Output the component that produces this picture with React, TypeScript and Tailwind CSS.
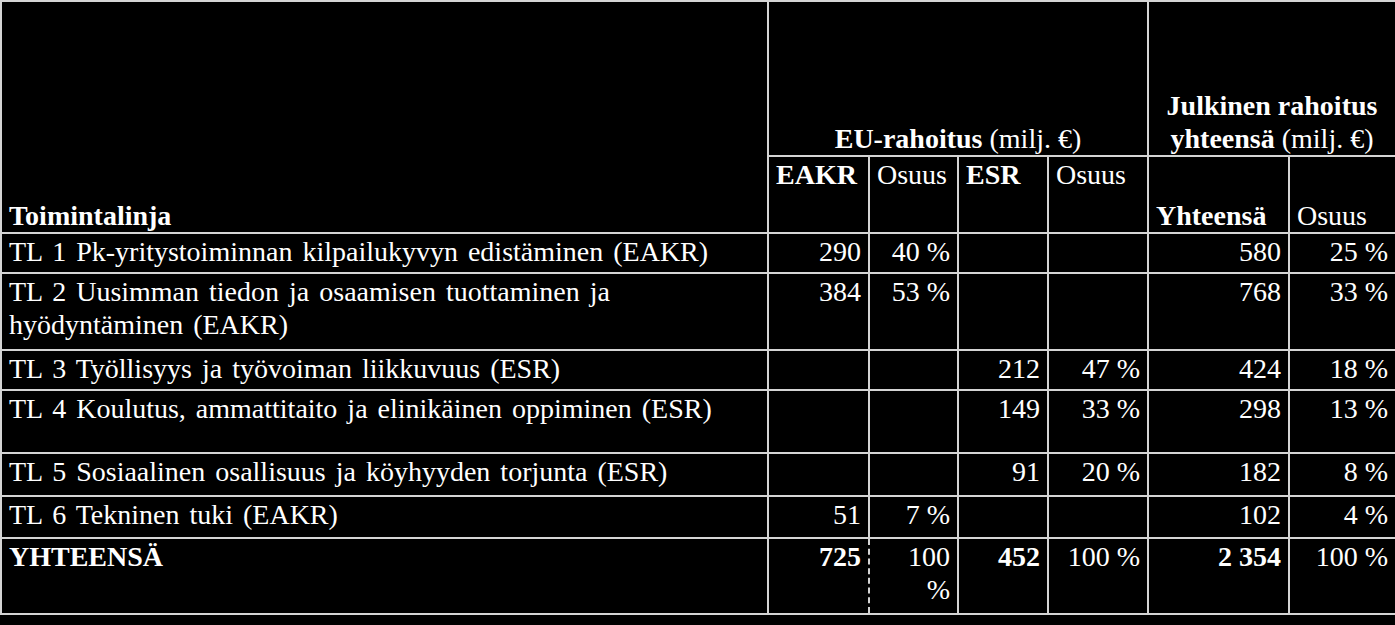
const rows = [
  { name: "TL 1 Pk-yritystoiminnan kilpailukyvyn edistäminen (EAKR)", eakr: "290", eakrPct: "40 %", esr: "", esrPct: "", total: "580", totalPct: "25 %", h: "h-[40px]" },
  { name: "TL 2 Uusimman tiedon ja osaamisen tuottaminen ja hyödyntäminen (EAKR)", eakr: "384", eakrPct: "53 %", esr: "", esrPct: "", total: "768", totalPct: "33 %", h: "h-[77px]" },
  { name: "TL 3 Työllisyys ja työvoiman liikkuvuus (ESR)", eakr: "", eakrPct: "", esr: "212", esrPct: "47 %", total: "424", totalPct: "18 %", h: "h-[40px]" },
  { name: "TL 4 Koulutus, ammattitaito ja elinikäinen oppiminen (ESR)", eakr: "", eakrPct: "", esr: "149", esrPct: "33 %", total: "298", totalPct: "13 %", h: "h-[63px]" },
  { name: "TL 5 Sosiaalinen osallisuus ja köyhyyden torjunta (ESR)", eakr: "", eakrPct: "", esr: "91", esrPct: "20 %", total: "182", totalPct: "8 %", h: "h-[43px]" },
  { name: "TL 6 Tekninen tuki (EAKR)", eakr: "51", eakrPct: "7 %", esr: "", esrPct: "", total: "102", totalPct: "4 %", h: "h-[42px]" },
];

const cell = "border-2 border-[#d4d4d4] px-[7px] pt-[1px] pb-0 align-top [font-family:Liberation_Serif,serif]";

export default function App() {
  return (
    <div className="w-[1395px] h-[625px] bg-black text-white overflow-hidden [font-family:Liberation_Serif,serif] text-[28px] leading-[33px]">
      <table className="table-fixed border-collapse w-[1395px]">
        <colgroup>
          <col className="w-[767px]" />
          <col className="w-[101px]" />
          <col className="w-[89px]" />
          <col className="w-[90px]" />
          <col className="w-[100px]" />
          <col className="w-[141px]" />
          <col className="w-[107px]" />
        </colgroup>
        <thead>
          <tr className="h-[155px]">
            <th rowSpan={2} className={`${cell} !align-bottom text-left font-bold`}>
              Toimintalinja
            </th>
            <th colSpan={4} className={`${cell} !align-bottom text-center`}>
              <span className="font-bold">EU-rahoitus</span>{" "}
              <span className="font-normal">(milj. €)</span>
            </th>
            <th colSpan={2} className={`${cell} !align-bottom text-center`}>
              <span className="font-bold">Julkinen rahoitus</span>
              <br />
              <span className="font-bold">yhteensä</span>{" "}
              <span className="font-normal">(milj. €)</span>
            </th>
          </tr>
          <tr className="h-[77px]">
            <th className={`${cell} text-left font-bold`}>EAKR</th>
            <th className={`${cell} text-left font-normal`}>Osuus</th>
            <th className={`${cell} text-left font-bold`}>ESR</th>
            <th className={`${cell} text-left font-normal`}>Osuus</th>
            <th className={`${cell} !align-bottom text-left font-bold`}>Yhteensä</th>
            <th className={`${cell} !align-bottom text-left font-normal`}>Osuus</th>
          </tr>
        </thead>
        <tbody>
          {rows.map((r) => (
            <tr key={r.name} className={r.h}>
              <td className={`${cell} text-left [word-spacing:3px]`}>{r.name}</td>
              <td className={`${cell} text-right`}>{r.eakr}</td>
              <td className={`${cell} text-right`}>{r.eakrPct}</td>
              <td className={`${cell} text-right`}>{r.esr}</td>
              <td className={`${cell} text-right`}>{r.esrPct}</td>
              <td className={`${cell} text-right`}>{r.total}</td>
              <td className={`${cell} text-right`}>{r.totalPct}</td>
            </tr>
          ))}
          <tr className="h-[76px]">
            <td className={`${cell} text-left font-bold`}>YHTEENSÄ</td>
            <td className={`${cell} text-right font-bold [border-right-style:dashed]`}>725</td>
            <td className={`${cell} text-right [border-left-style:dashed]`}>
              100
              <br />%
            </td>
            <td className={`${cell} text-right font-bold`}>452</td>
            <td className={`${cell} text-right`}>100 %</td>
            <td className={`${cell} text-right font-bold`}>2 354</td>
            <td className={`${cell} text-right`}>100 %</td>
          </tr>
        </tbody>
      </table>
    </div>
  );
}
